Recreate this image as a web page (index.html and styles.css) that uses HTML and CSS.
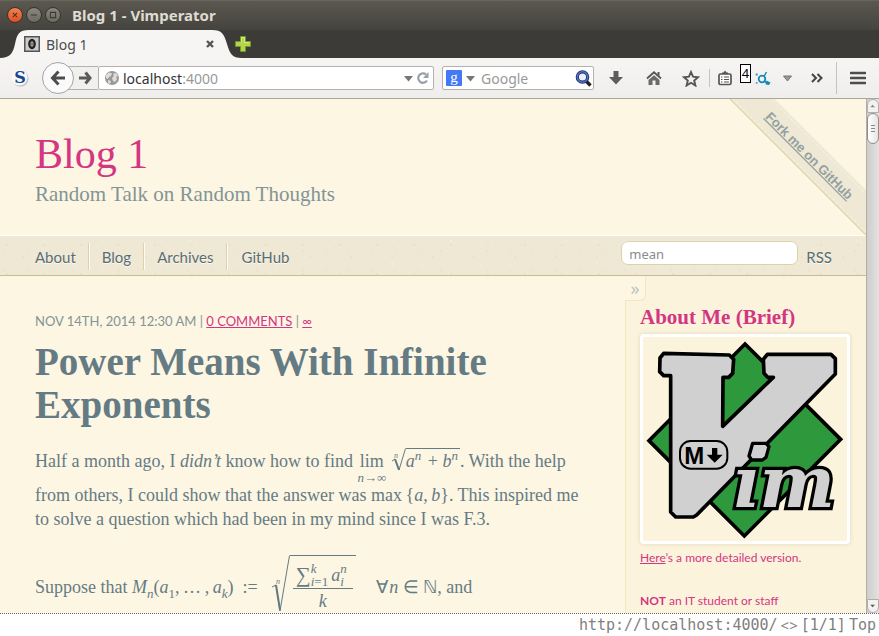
FILE: index.html
```html
<!DOCTYPE html>
<html lang="en">
<head>
<meta charset="utf-8">
<title>Blog 1 - Vimperator</title>
<link rel="stylesheet" href="styles.css">
</head>
<body>
<div class="titlebar">
  <button class="win close" aria-label="Close"><svg viewBox="0 0 16 16"><path d="M5.500 5.500l5 5M10.500 5.500l-5 5"/></svg></button>
  <button class="win" aria-label="Minimize"><svg viewBox="0 0 16 16"><path d="M4.500 8h7"/></svg></button>
  <button class="win" aria-label="Maximize"><svg viewBox="0 0 16 16"><path d="M5 5h6v6H5z"/></svg></button>
  <span class="wintitle">Blog 1 - Vimperator</span>
</div>
<div class="tabs">
  <div class="tab">
    <svg class="tabshape" viewBox="0 0 242 28" preserveAspectRatio="none"><path d="M0 28C10 28 13 23 15 14C17 4 19 0 29 0H212C222 0 224 4 227 14C230 24 232 28 242 28Z" fill="#f6f5f4"/></svg>
    <svg class="favicon" viewBox="0 0 16 16"><rect x=".75" y=".75" width="14.500" height="14.500" fill="#ccc" stroke="#555" stroke-width="1.500"/><ellipse cx="8" cy="8" rx="2.700" ry="4" fill="none" stroke="#222" stroke-width="2.300"/><path d="M8 6.500v3" stroke="#222"/></svg>
    <span class="tabname">Blog 1</span>
    <button class="tabclose" aria-label="Close tab"><svg viewBox="0 0 10 10"><path d="M2 2l6 6M8 2L2 8" stroke="#555" stroke-width="2.400"/></svg></button>
  </div>
  <button class="newtab" aria-label="New tab"><svg viewBox="0 0 16 16"><path d="M5.500 .5h5v5h5v5h-5v5h-5v-5h-5v-5h5z" fill="#b5d44a" stroke="#6f9a2b"/><path d="M6.500 6.500v-5h3v5h5" fill="none" stroke="#d6ea82"/></svg></button>
</div>
<div class="toolbar">
  <button class="tool s" aria-label="Stylish"><svg width="18" height="18" viewBox="0 0 18 18"><circle cx="9.500" cy="9.500" r="8" fill="#bdbdbd"/><circle cx="8.500" cy="8.500" r="8" fill="#f8f8f8"/><text x="9" y="14" text-anchor="middle" class="slogo">S</text></svg></button>
  <div class="nav-pair">
    <button class="back" aria-label="Back"><svg width="16" height="16" viewBox="0 0 16 16"><path d="M8.500 1.500L2.500 8l6 6.500M3 8h12" fill="none" stroke="#4d4d4d" stroke-width="3"/></svg></button>
    <button class="fwd" aria-label="Forward"><svg width="13" height="14" viewBox="0 0 13 14"><path d="M6.500 1.500L11 7l-4.500 5.500M0 7h11" fill="none" stroke="#5a5a5a" stroke-width="3"/></svg></button>
  </div>
  <div class="url">
    <svg width="14" height="14" viewBox="0 0 14 14"><circle cx="7" cy="7" r="7" fill="#999"/><path d="M1 4l3-2.500 3 1-1 2.500-2 1-1 2-2-1zM8 3l3-1 2 3-2 1 1 2-2 3-2-1-1-3 2-2zM3 9l3 1-1 3-2-1z" fill="#ddd"/></svg>
    <span class="addr">localhost<i>:4000</i></span>
    <svg width="9" height="7" viewBox="0 0 9 7"><path d="M0 1h9L4.500 6.500z" fill="#777"/></svg>
    <svg width="12" height="12" viewBox="0 0 12 12"><path d="M10 8.500A4.700 4.700 0 1 1 9 2.500" fill="none" stroke="#97a1aa" stroke-width="2.200"/><path d="M11.500 0v6H6z" fill="#97a1aa"/></svg>
  </div>
  <div class="search">
    <svg width="16" height="16" viewBox="0 0 16 16"><rect width="16" height="16" rx="1" fill="#4479f5"/><text x="8" y="12" text-anchor="middle" class="glogo">g</text></svg>
    <svg width="9" height="7" viewBox="0 0 9 7"><path d="M0 1h9L4.500 6.500z" fill="#777"/></svg>
    <input class="gfield" type="text" placeholder="Google" aria-label="Search Google">
    <svg width="17" height="17" viewBox="0 0 17 17"><path d="M11 11l4.500 4.500" stroke="#222" stroke-width="3.400"/><circle cx="7.500" cy="7" r="5.200" fill="#e8effa" stroke="#1d2b66" stroke-width="3.200"/><circle cx="7.500" cy="7" r="5.200" fill="none" stroke="#526ec1" stroke-width="1.600"/></svg>
  </div>
  <div class="tools">
    <button class="tool wide" aria-label="Downloads"><svg width="14" height="14" viewBox="0 0 14 14"><path d="M4.500 0h5v6H14l-7 7.500L0 6h4.500z" fill="#5c5c5c"/></svg></button>
    <button class="tool wide" aria-label="Home"><svg width="16" height="14" viewBox="0 0 16 14"><path d="M2.500 9L8 4.300 13.500 9v5H9.500V9.500h-3V14h-4z" fill="#6a6a6a"/><path d="M1 7.500L8 1.300l7 6.200" fill="none" stroke="#555" stroke-width="1.800"/><path d="M11.500 1h2v4l-2-1.800z" fill="#555"/></svg></button>
    <button class="tool star" aria-label="Bookmark"><svg width="18" height="17" viewBox="0 0 18 17"><path d="M9 2l2 4.700 5 .5-3.800 3.300 1.200 5L9 12.800l-4.400 2.700 1.200-5L2 7.200l5-.5z" fill="none" stroke="#555" stroke-width="1.900"/></svg></button>
    <span class="sep"></span>
    <button class="tool clip" aria-label="Bookmarks"><svg width="16" height="16" viewBox="0 0 16 16"><path d="M5 4V2.500h1.500L8 .5l1.500 2H11V4z" fill="#555"/><rect x="2" y="4" width="12" height="10.500" rx="1.500" fill="#fff" stroke="#555" stroke-width="1.700"/><path d="M4 7h1.500M7 7h5M4 9.500h1.500M7 9.500h5M4 12h1.500M7 12h5" stroke="#555" stroke-width="1.200"/></svg></button>
    <span class="count">4</span>
    <button class="tool dd" aria-label="Add-on"><svg width="16" height="14" viewBox="0 0 16 14"><circle cx="7" cy="8" r="3.300" fill="none" stroke="#1589b8" stroke-width="1.800"/><path d="M9 5.500L11.500 1M9.500 10.500l3 1.500" stroke="#1589b8" stroke-width="1.500"/><path d="M11.500 9.500l4 2-1.500 2.500-3.500-.5z" fill="#1589b8"/><circle cx="1.700" cy="3.500" r="1.200" fill="#4aa6c9"/><circle cx="1.700" cy="12" r="1" fill="#4aa6c9"/></svg></button>
    <button class="tool caret" aria-label="Add-on menu"><svg width="9" height="7" viewBox="0 0 9 7"><path d="M.5 1h8L4.500 6z" fill="#999" stroke="#777"/></svg></button>
    <button class="tool more" aria-label="More tools"><svg width="12" height="10" viewBox="0 0 12 10"><path d="M1 1l4 4-4 4M6.500 1l4 4-4 4" fill="none" stroke="#444" stroke-width="2"/></svg></button>
    <span class="sep tall"></span>
    <button class="tool menu" aria-label="Menu"><svg width="16" height="14" viewBox="0 0 16 14"><path d="M1 2h14M1 7h14M1 12h14" stroke="#4d4d4d" stroke-width="2.600" stroke-linecap="round"/></svg></button>
  </div>
</div>
<div class="view">
  <div class="page">
    <header class="head">
      <h1>Blog 1</h1>
      <h2>Random Talk on Random Thoughts</h2>
    </header>
    <a class="ribbon" href="#"><span>Fork me on GitHub</span></a>
    <nav class="menu-bar">
      <ul>
        <li><a href="#">About</a></li>
        <li><a href="#">Blog</a></li>
        <li><a href="#">Archives</a></li>
        <li><a href="#">GitHub</a></li>
      </ul>
      <input class="find" type="text" value="mean" aria-label="Search">
      <a class="rss" href="#">RSS</a>
    </nav>
    <div class="columns">
      <article class="post">
        <p class="meta">NOV 14TH, 2014 12:30 AM | <a href="#">0 COMMENTS</a> | <a href="#">∞</a></p>
        <h3>Power Means With Infinite Exponents</h3>
        <p>Half a month ago, I <em>didn’t</em> know how to find <span class="lim"><span>lim</span><span class="under"><i>n</i>→∞</span></span> <span class="root"><svg width="15" height="24" viewBox="0 0 15 24"><text x="3" y="10" class="idx">n</text><path d="M1 13l3-2 4 11L14.500 .5" class="thin"/><path d="M4 11l4 11" class="thick"/></svg><span class="under-root"><i>a</i><sup>n</sup> + <i>b</i><sup>n</sup></span></span>. With the help from others, I could show that the answer was max&thinsp;{<i>a</i>,&thinsp;<i>b</i>}. This inspired me to solve a question which had been in my mind since I was F.3.</p>
        <p class="suppose">Suppose that <i>M<sub>n</sub></i>(<i>a</i><sub class="num">1</sub>,&thinsp;…&thinsp;,&thinsp;<i>a<sub>k</sub></i>)&ensp;:=&ensp;<span class="root big"><svg width="19" height="58" viewBox="0 0 19 58"><text x="5" y="29" class="idx">n</text><path d="M1 32l4-2 4 26L18.500 .5" class="thin"/><path d="M5 30l4 25" class="thick"/></svg><span class="under-root"><span class="frac"><span class="top"><span class="sigma">∑</span><span class="scripts"><i>k</i><span><i>i</i>=1</span></span><i>a</i><span class="scripts"><i>n</i><i>i</i></span></span><i>k</i></span></span></span><span class="quad">∀</span>&hairsp;<i>n</i> ∈ ℕ, and</p>
      </article>
      <aside class="side">
        <button class="toggle" aria-label="Toggle sidebar">»</button>
        <h4>About Me (Brief)</h4>
        <svg class="logo" viewBox="39 21 612 612" role="img" aria-label="Vim">
          <path d="M345 42L632 328L343 618L57 332Z" fill="#2e993c" stroke="#000" stroke-width="11"/>
          <path d="M101 70L298 75L311 88L308 130L296 142H279L278 289L430 142H413L402 130L400 88L412 73H603L616 86V132L200 555L190 561H137L122 546V137H101L89 125L90 84Z" fill="#d0d0d0" stroke="#000" stroke-width="11" stroke-linejoin="round"/>
          <rect x="150" y="333" width="142" height="83" rx="32" fill="#d0d0d0" stroke="#000" stroke-width="6"/>
          <text x="163" y="401" class="mark">M</text>
          <path d="M246 354h16v20h16l-24 24-24-24h16z"/>
          <path d="M368 340H408L417 350L408 382L397 390H365L357 378Z" fill="#d0d0d0" stroke="#000" stroke-width="10" stroke-linejoin="round"/>
          <text x="306" y="531" class="im">ım</text>
        </svg>
        <p><a href="#">Here</a>’s a more detailed version.</p>
        <p class="note"><b>NOT</b> an IT student or staff</p>
      </aside>
    </div>
  </div>
  <div class="scroll">
    <svg class="end" viewBox="0 0 13 13"><path d="M3 8h6L6 5z" fill="#888"/></svg>
    <div class="thumb"></div>
    <svg class="end foot" viewBox="0 0 13 13"><path d="M3 5h6L6 8z" fill="#555"/></svg>
  </div>
</div>
<footer class="status"><span>http://localhost:4000/</span><span class="hist">&lt;&gt;</span><span>[1/1]</span><span>Top</span></footer>
</body>
</html>
```

FILE: styles.css
```css
* { box-sizing: border-box; }
body { margin: 0; height: 100vh; display: flex; flex-direction: column; overflow: hidden; background: #3c3b37; font-family: "Liberation Serif", serif; }
button { border: 0; padding: 0; margin: 0; background: none; display: flex; align-items: center; justify-content: center; font: inherit; }
svg { display: block; flex: none; }

.titlebar { height: 30px; flex: none; display: flex; align-items: center; gap: 3px; padding: 0 7px 2px; background: linear-gradient(#5b5850, #45433e); border-top: 1px solid #68655c; }
.win { width: 16px; height: 16px; border-radius: 50%; background: linear-gradient(#8b877d, #6d6a62); border: 1px solid #35342f; }
.win svg { width: 14px; height: 14px; fill: none; stroke: #3b3a36; stroke-width: 1.2; }
.win.close { background: linear-gradient(#f4814f, #e2501f); }
.wintitle { margin-left: 8px; color: #dfdbd2; font: bold 15px "Noto Sans", sans-serif; }

.tabs { height: 28px; flex: none; display: flex; align-items: center; background: #3c3b37; }
.tab { position: relative; width: 242px; height: 28px; display: flex; align-items: center; padding: 0 27px 0 24px; }
.tabshape { position: absolute; inset: 0; width: 100%; height: 100%; }
.favicon { position: relative; width: 16px; height: 16px; }
.tabname { position: relative; flex: 1; margin-left: 6px; font: 14px "Noto Sans", sans-serif; color: #4c4c4c; }
.tabclose { position: relative; width: 10px; height: 10px; }
.tabclose svg { width: 10px; }
.newtab { width: 16px; height: 16px; margin-left: -7px; position: relative; }
.newtab svg { width: 16px; }

.toolbar { height: 41px; flex: none; display: flex; align-items: center; background: linear-gradient(#f6f5f4, #efeeec); border-bottom: 1px solid #aaa69c; }
.s { width: 20px; margin: 0 12px 0 10px; }
.slogo { font: bold 16px "DejaVu Serif", serif; fill: #17458f; }
.glogo { font: 15px "Liberation Serif", serif; fill: #fff; }
.nav-pair { display: flex; align-items: center; }
.back { width: 32px; height: 32px; border: 1px solid #a0a5aa; border-radius: 50%; background: #fafafa; position: relative; }
.fwd { width: 32px; height: 24px; margin-left: -8px; padding-left: 7px; border: 1px solid #b5b2ab; border-width: 1px 0; background: #f1f0ee; }
.url, .search { height: 24px; display: flex; align-items: center; background: #fff; border: 1px solid #b5b2ab; border-radius: 2px; }
.url { flex: 1; padding: 0 4px 0 6px; gap: 4px; }
.addr { flex: 1; font: 14px "Noto Sans", sans-serif; color: #333; }
.addr i { font-style: normal; color: #999; }
.search { width: 152px; margin: 0 3px 0 8px; padding: 0 1px 0 3px; gap: 4px; }
.gfield { flex: 1; min-width: 0; border: 0; padding: 0 0 0 2px; background: none; font: 14px "Noto Sans", sans-serif; }
.gfield::placeholder { color: #999; opacity: 1; }
.tools { display: flex; align-items: center; }
.wide { width: 38px; }
.star { width: 36px; }
.sep { width: 1px; height: 18px; background: #bcc4cc; }
.sep.tall { height: 32px; }
.clip { width: 30px; }
.count { width: 11px; height: 19px; margin-bottom: 10px; border: 1px solid #000; background: #fff; font: 13px/17px "Noto Sans", sans-serif; text-align: center; color: #000; }
.dd { width: 24px; }
.caret { width: 24px; }
.more { width: 36px; margin-right: 1px; }
.menu { width: 42px; }

.view { flex: 1; min-height: 0; display: flex; background: #fdf6e3; overflow: hidden; }
.page { flex: 1; min-width: 0; position: relative; overflow: hidden; color: #657b83; }
.head { height: 136px; padding: 31px 35px 0; }
h1, h2, h3, h4, p, ul { margin: 0; padding: 0; }
h1 { font-size: 42px; font-weight: 400; line-height: 48px; color: #d33682; }
h2 { font-size: 21px; font-weight: 400; line-height: 32px; color: #839496; }
.ribbon { position: absolute; top: 41px; right: -53px; width: 220px; height: 32px; padding: 2px 0; transform: rotate(45deg); background: #eee8d5; border-bottom: 1px solid #ddd1a0; color: #93a1a1; font: bold 13px/26px "Liberation Sans", sans-serif; text-align: center; }
.ribbon span { display: block; border: 1px dashed #f7f1e0; border-width: 1px 0; text-decoration: underline; }
.menu-bar { height: 41px; display: flex; align-items: center; padding: 0 34px 0 35px; border-top: 1px solid #fff; border-bottom: 1px solid #c9bd8f; background-color: #eee8d5; background-image: radial-gradient(circle at 7px 9px, #e8e1cc 1px, transparent 1px), radial-gradient(circle at 23px 21px, #e9e2ce 1px, transparent 1px), radial-gradient(circle at 16px 5px, #f1ebdb 1px, transparent 1px), radial-gradient(circle at 4px 15px, #e9e3cf 1px, transparent 1px); background-size: 37px 29px, 41px 31px, 29px 23px, 23px 19px; font: 15px/27px Lato, sans-serif; }
.menu-bar ul { display: flex; flex: 1; list-style: none; margin-top: 2px; }
.menu-bar li { padding: 1px 12px 0; border-right: 1px solid #ddd3ab; box-shadow: 1px 0 #fffbef; height: 27px; margin-right: 1px; }
.menu-bar li:first-child { padding-left: 0; }
.menu-bar li:last-child { padding-left: 14px; border: 0; box-shadow: none; }
.menu-bar a { color: #586e75; text-decoration: none; text-shadow: 0 1px #fff9ec; }
.find { width: 177px; height: 24px; margin: 0 8px 6px 0; padding: 3px 7px 0; border: 1px solid #ddd3ab; border-radius: 7px; background: #fff; color: #8a8a8a; font: 13px "Noto Sans", sans-serif; }
.rss { margin-top: 4px; }

.columns { display: flex; align-items: stretch; }
.post { flex: 1; min-width: 0; padding: 34px 35px 0; font-size: 18px; line-height: 24px; }
.meta { font: 13px/22px Lato, sans-serif; color: #839496; }
.meta a, .side a { color: #d33682; }
h3 { font-size: 39px; line-height: 43px; padding: 8px 0 22px; }
sup, sub, .under, .scripts { font-size: 13px; line-height: 0; }
sup, sub { font-style: italic; }
sup { margin-right: 2px; }
.num { font-style: normal; }
.lim { display: inline-flex; flex-direction: column; align-items: center; }
.under { line-height: 10px; }
.root { display: inline-flex; align-items: flex-start; vertical-align: -5px; line-height: 25px; }
.under-root { border-top: 1px solid #657b83; white-space: nowrap; }
.thin, .thick { fill: none; stroke: #657b83; }
.thick { stroke-width: 2; }
.idx { font: italic 8px "Liberation Serif", serif; fill: #657b83; }
.suppose { margin-top: 24px; }
.big { margin-left: 4px; vertical-align: -20px; }
.big .under-root { padding: 6px 3px 0; }
.frac { display: flex; flex-direction: column; align-items: center; line-height: 24px; }
.top { display: flex; align-items: center; height: 27px; padding: 0 3px; border-bottom: 1px solid #657b83; }
.sigma { font-size: 21px; }
.scripts { display: flex; flex-direction: column; line-height: 13px; padding-right: 3px; }
.quad { margin-left: 20px; }

.side { width: 241px; flex: none; padding: 0 16px 0 14px; border-left: 1px solid #f5e6c0; background: #fcf3dc; color: #d33682; font: 12px/18px Lato, sans-serif; }
.toggle { width: 21px; height: 25px; margin-left: -15px; border: 1px solid #f5e6c0; border-width: 0 1px 1px 0; border-radius: 0 0 6px 0; background: #fdf6e3; color: #bcc3b8; font: 18px "Noto Sans", sans-serif; }
h4 { font: bold 21px/33px "Liberation Serif", serif; }
.logo { width: 210px; height: 210px; border: 3px solid #fff; border-radius: 4px; box-shadow: 0 0 4px #e0d6bd; }
.mark { font: bold 72px "Liberation Sans", sans-serif; }
.im { font: italic bold 215px "DejaVu Serif", serif; fill: #d0d0d0; stroke: #000; stroke-width: 20px; paint-order: stroke; }
.side p { padding-top: 5px; }
.side .note { padding-top: 25px; }

.scroll { width: 13px; flex: none; display: flex; flex-direction: column; align-items: center; background: linear-gradient(90deg, #cfcdcb, #e4e2e1); border-left: 1px solid #b1aeaa; }
.end { width: 12px; height: 14px; flex: none; background: #f3f2f1; border: 1px solid #b1aeaa; border-radius: 6px 6px 0 0; }
.foot { margin-top: auto; border-radius: 0 0 6px 6px; }
.thumb { width: 12px; height: 31px; flex: none; border: 1px solid #918e8a; border-radius: 6px; background: linear-gradient(#888, #888) center 11px / 4px 1px no-repeat, linear-gradient(#888, #888) center 14px / 4px 1px no-repeat, linear-gradient(#888, #888) center 17px / 4px 1px no-repeat, linear-gradient(90deg, #fff, #e6e4e2); }
.status { height: 23px; flex: none; display: flex; justify-content: flex-end; gap: 3px; padding-right: 3px; border-top: 1px dotted #666; background: #fff; color: #808080; font: 15px/22px "DejaVu Sans Mono", monospace; }
.hist { font-family: "Noto Sans", sans-serif; }
```
